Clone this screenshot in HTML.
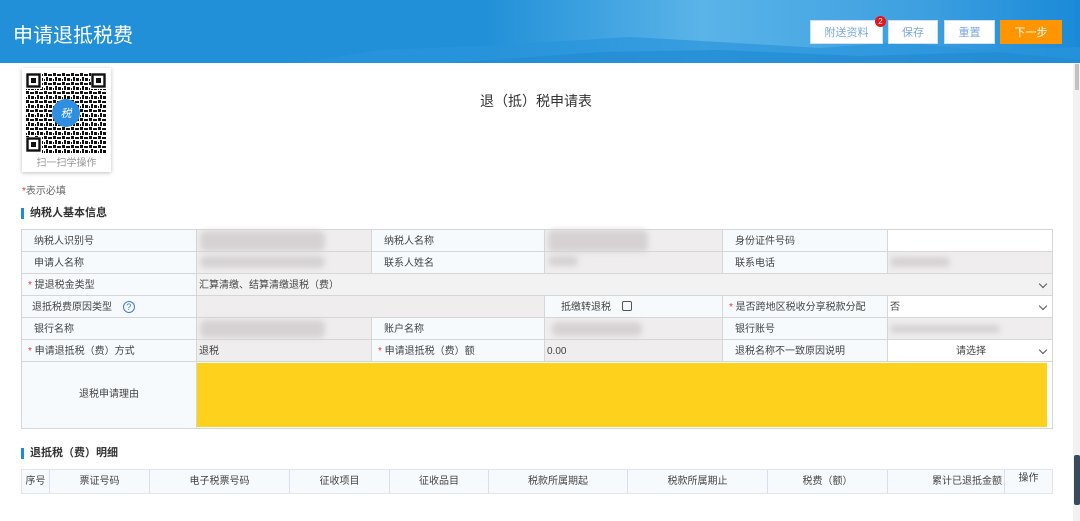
<!DOCTYPE html>
<html><head><meta charset="utf-8">
<style>
*{margin:0;padding:0;box-sizing:border-box}
body{width:1080px;height:521px;overflow:hidden;background:#fff;font-family:"Liberation Sans","Noto Sans CJK SC",sans-serif;font-size:10px;color:#444;position:relative}
.hdr{position:absolute;left:0;top:0;width:1080px;height:63px;background:linear-gradient(90deg,#2290d8 0%,#2290d8 45%,#5ab4e8 65%,#3ea0e0 85%,#1a8ad8 100%);overflow:hidden}
.hdr h1{position:absolute;left:13px;top:19px;font-size:20px;color:#fff;font-weight:normal}
.btn{position:absolute;top:20px;height:24px;background:#fff;color:#7aa8e0;font-size:11px;text-align:center;line-height:24px;border:1px solid #cfe0f0}
.abs{position:absolute}
.cell{position:absolute;border-right:1px solid #d6d6d6;border-bottom:1px solid #d6d6d6;line-height:23px;padding-left:12px;white-space:nowrap;overflow:hidden}
.L{background:#f7fafd}
.V{background:#efedee;padding-left:2px}
.W{background:#fff;padding-left:2px}
.req{color:#e33}
.blur{position:absolute;background:#d6d2d3;filter:blur(3px);border-radius:6px}
.chev{position:absolute;right:6px;top:7px;width:6px;height:6px;border-right:1.3px solid #555;border-bottom:1.3px solid #555;transform:rotate(45deg)}
.sec{position:absolute;left:21px;font-size:11px;font-weight:bold;color:#333;border-left:3px solid #1e88e5;padding-left:6px;line-height:11px}
.th{position:absolute;top:470px;height:23px;border-right:1px solid #dde;text-align:center;line-height:24px;background:#f7fafd}
</style></head><body>
<div class="hdr">
<svg class="abs" style="left:300px;top:0" width="780" height="63"><path d="M0 63 L80 50 L200 45 L330 37 L420 42 L520 48 L600 42 L680 50 L780 47 L780 63Z" fill="#2a94dc" opacity=".7"/><path d="M150 63 L300 52 L420 50 L560 56 L700 52 L780 60 L780 63Z" fill="#1f88d2" opacity=".6"/></svg>
<h1>申请退抵税费</h1>
</div>
<div class="btn" style="left:810px;width:73px">附送资料</div>
<div class="abs" style="left:875px;top:16px;width:11px;height:11px;border-radius:50%;background:#e8141c;color:#fff;font-size:8px;text-align:center;line-height:11px">2</div>
<div class="btn" style="left:888px;width:50px">保存</div>
<div class="btn" style="left:944px;width:51px">重置</div>
<div class="btn" style="left:1000px;width:62px;background:#ff9500;border-color:#ff9500;color:#fff">下一步</div>
<div class="abs" style="left:1073px;top:63px;width:7px;height:458px;background:#f1f1f1"></div>
<div class="abs" style="left:1075px;top:64px;width:4px;height:26px;background:#c1c1c1"></div>

<div class="abs" style="left:22px;top:68px;width:89px;height:104px;background:#fff;box-shadow:0 1px 4px rgba(0,0,0,.25)">
<svg class="abs" style="left:4px;top:5px" width="81" height="80">
<defs><pattern id="q" width="9" height="9" patternUnits="userSpaceOnUse"><rect width="9" height="9" fill="#fff"/><rect x="0" y="0" width="3" height="3" fill="#111"/><rect x="4" y="1" width="4" height="2" fill="#111"/><rect x="2" y="4" width="2" height="4" fill="#111"/><rect x="5" y="5" width="3" height="3" fill="#111"/><rect x="0" y="6" width="1" height="2" fill="#111"/></pattern></defs>
<rect width="81" height="80" fill="url(#q)"/>
<g fill="#fff"><rect x="0" y="0" width="16" height="16"/><rect x="65" y="0" width="16" height="16"/><rect x="0" y="64" width="16" height="16"/></g>
<g fill="none" stroke="#111" stroke-width="2.4"><rect x="1.5" y="1.5" width="12" height="12"/><rect x="66.5" y="1.5" width="12" height="12"/><rect x="1.5" y="65.5" width="12" height="12"/></g>
<g fill="#111"><rect x="5" y="5" width="5" height="5"/><rect x="70" y="5" width="5" height="5"/><rect x="5" y="69" width="5" height="5"/></g>
<circle cx="40" cy="40" r="14" fill="#2e8fe0"/><text x="40" y="44" font-size="11" fill="#fff" text-anchor="middle" font-style="italic">税</text>
</svg>
<div class="abs" style="left:0;top:86px;width:89px;text-align:center;color:#999;font-size:10px">扫一扫学操作</div>
</div>
<div class="abs" style="left:480px;top:91px;font-size:14px;color:#333">退（抵）税申请表</div>
<div class="abs" style="left:22px;top:182px;color:#666;font-size:10px"><span class="req">*</span>表示必填</div>
<div class="sec" style="top:208px">纳税人基本信息</div>

<div class="abs" style="left:21px;top:229px;width:1032px;height:200px;border-left:1px solid #d6d6d6;border-top:1px solid #d6d6d6"></div>
<div class="cell L" style="left:22px;top:230px;width:175px;height:22px">纳税人识别号</div>
<div class="cell V" style="left:197px;top:230px;width:175px;height:22px"></div>
<div class="cell L" style="left:372px;top:230px;width:173px;height:22px">纳税人名称</div>
<div class="cell V" style="left:545px;top:230px;width:178px;height:22px"></div>
<div class="cell L" style="left:723px;top:230px;width:165px;height:22px">身份证件号码</div>
<div class="cell W" style="left:888px;top:230px;width:165px;height:22px"></div>
<div class="cell L" style="left:22px;top:252px;width:175px;height:22px">申请人名称</div>
<div class="cell V" style="left:197px;top:252px;width:175px;height:22px"></div>
<div class="cell L" style="left:372px;top:252px;width:173px;height:22px">联系人姓名</div>
<div class="cell V" style="left:545px;top:252px;width:178px;height:22px"></div>
<div class="cell L" style="left:723px;top:252px;width:165px;height:22px">联系电话</div>
<div class="cell V" style="left:888px;top:252px;width:165px;height:22px"></div>
<div class="cell L" style="left:22px;top:274px;width:175px;height:22px;padding-left:6px"><span class="req">* </span>提退税金类型</div>
<div class="cell V" style="left:197px;top:274px;width:856px;height:22px;background:#f3f2f3">汇算清缴、结算清缴退税（费）<i class="chev"></i></div>
<div class="cell L" style="left:22px;top:296px;width:175px;height:22px;padding-left:10px">退抵税费原因类型 <span style="display:inline-block;width:12px;height:12px;border:1px solid #3a7be0;border-radius:50%;color:#3a7be0;font-size:9px;line-height:10px;text-align:center;margin-left:8px">?</span></div>
<div class="cell V" style="left:197px;top:296px;width:348px;height:22px"></div>
<div class="cell L" style="left:545px;top:296px;width:178px;height:22px;padding-left:16px">抵缴转退税 <span style="display:inline-block;width:10px;height:10px;border:1px solid #555;border-radius:2px;margin-left:8px;vertical-align:-1px"></span></div>
<div class="cell L" style="left:723px;top:296px;width:165px;height:22px;padding-left:6px"><span class="req">* </span>是否跨地区税收分享税款分配</div>
<div class="cell W" style="left:888px;top:296px;width:165px;height:22px">否<i class="chev"></i></div>
<div class="cell L" style="left:22px;top:318px;width:175px;height:22px">银行名称</div>
<div class="cell V" style="left:197px;top:318px;width:175px;height:22px"></div>
<div class="cell L" style="left:372px;top:318px;width:173px;height:22px">账户名称</div>
<div class="cell V" style="left:545px;top:318px;width:178px;height:22px"></div>
<div class="cell L" style="left:723px;top:318px;width:165px;height:22px">银行账号</div>
<div class="cell V" style="left:888px;top:318px;width:165px;height:22px"></div>
<div class="cell L" style="left:22px;top:340px;width:175px;height:22px;padding-left:6px"><span class="req">* </span>申请退抵税（费）方式</div>
<div class="cell V" style="left:197px;top:340px;width:175px;height:22px">退税</div>
<div class="cell L" style="left:372px;top:340px;width:173px;height:22px;padding-left:6px"><span class="req">* </span>申请退抵税（费）额</div>
<div class="cell V" style="left:545px;top:340px;width:178px;height:22px">0.00</div>
<div class="cell L" style="left:723px;top:340px;width:165px;height:22px">退税名称不一致原因说明</div>
<div class="cell W" style="left:888px;top:340px;width:165px;height:22px;text-align:center">请选择<i class="chev"></i></div>
<div class="cell L" style="left:22px;top:362px;width:175px;height:67px;line-height:66px;text-align:center;padding:0">退税申请理由</div>
<div class="cell W" style="left:197px;top:362px;width:856px;height:67px"><div class="abs" style="left:0;top:1px;width:850px;height:64px;background:#fed11c"></div></div>

<div class="blur" style="left:200px;top:231px;width:125px;height:20px"></div>
<div class="blur" style="left:548px;top:230px;width:100px;height:22px"></div>
<div class="blur" style="left:200px;top:256px;width:125px;height:12px"></div>
<div class="blur" style="left:548px;top:256px;width:30px;height:10px"></div>
<div class="blur" style="left:890px;top:257px;width:60px;height:10px"></div>
<div class="blur" style="left:200px;top:320px;width:125px;height:18px"></div>
<div class="blur" style="left:552px;top:322px;width:90px;height:14px"></div>
<div class="blur" style="left:890px;top:325px;width:110px;height:8px"></div>

<div class="sec" style="top:448px">退抵税（费）明细</div>
<div class="abs" style="left:21px;top:469px;width:1032px;height:25px;border:1px solid #e2e6ea;background:#f7fafd"></div>
<div class="th" style="left:22px;width:28px">序号</div>
<div class="th" style="left:50px;width:100px">票证号码</div>
<div class="th" style="left:150px;width:140px">电子税票号码</div>
<div class="th" style="left:290px;width:100px">征收项目</div>
<div class="th" style="left:390px;width:99px">征收品目</div>
<div class="th" style="left:489px;width:139px">税款所属期起</div>
<div class="th" style="left:628px;width:140px">税款所属期止</div>
<div class="th" style="left:768px;width:120px">税费（额）</div>
<div class="th" style="left:888px;width:117px;text-align:right;padding-right:2px">累计已退抵金额</div>
<div class="th" style="left:1005px;width:47px;line-height:17px;border-right:none">操作</div>
<div class="abs" style="left:1074px;top:455px;width:6px;height:50px;background:#3b4a5a;border-radius:2px"></div>
</body></html>
